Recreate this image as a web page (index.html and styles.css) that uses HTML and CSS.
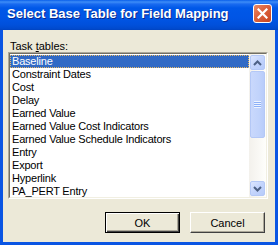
FILE: index.html
```html
<!DOCTYPE html>
<html lang="en">
<head>
    <meta charset="UTF-8">
    <title>Select Base Table for Field Mapping</title>
    <link rel="stylesheet" href="styles.css">
</head>
<body>
    <div class="window">
        <div class="titlebar">
            <span class="title">Select Base Table for Field Mapping</span>
            <div class="close">
                <svg width="11" height="11" viewBox="0 0 11 11">
                    <path d="M1.5 1.5 L9.5 9.5 M9.5 1.5 L1.5 9.5" stroke="#fff" stroke-width="2.2" stroke-linecap="square"/>
                </svg>
            </div>
        </div>
        <div class="frame">
            <div class="content">
                <div class="label">Task <u>t</u>ables:</div>
                <div class="listbox">
                    <div class="listbox-inner">
                        <ul class="items">
                            <li class="selected">Baseline</li>
                            <li>Constraint Dates</li>
                            <li>Cost</li>
                            <li>Delay</li>
                            <li>Earned Value</li>
                            <li>Earned Value Cost Indicators</li>
                            <li>Earned Value Schedule Indicators</li>
                            <li>Entry</li>
                            <li>Export</li>
                            <li>Hyperlink</li>
                            <li>PA_PERT Entry</li>
                        </ul>
                        <div class="scrollbar">
                            <div class="sb-btn">
                                <span>
                                    <svg width="9" height="6" viewBox="0 0 9 6">
                                        <path d="M1 5 L4.5 1.5 L8 5" fill="none" stroke="#4D6185" stroke-width="2"/>
                                    </svg>
                                </span>
                            </div>
                            <div class="sb-track">
                                <div class="sb-thumb">
                                    <span class="grip"></span>
                                </div>
                            </div>
                            <div class="sb-btn">
                                <span>
                                    <svg width="9" height="6" viewBox="0 0 9 6">
                                        <path d="M1 1 L4.5 4.5 L8 1" fill="none" stroke="#4D6185" stroke-width="2"/>
                                    </svg>
                                </span>
                            </div>
                        </div>
                    </div>
                </div>
                <div class="buttons">
                    <button class="btn default">OK</button>
                    <button class="btn">Cancel</button>
                </div>
            </div>
        </div>
    </div>
</body>
</html>
```

FILE: styles.css
```css
* {
    box-sizing: border-box;
}
html, body {
    margin: 0;
}
body {
    width: 278px;
    height: 245px;
    overflow: hidden;
    font-family: "Liberation Sans", Arial, sans-serif;
    font-size: 11px;
    color: #000;
}
.window {
    width: 278px;
    height: 245px;
    display: flex;
    flex-direction: column;
    background: #0A55E3;
}
.titlebar {
    height: 30px;
    flex: none;
    display: flex;
    align-items: flex-start;
    justify-content: space-between;
    background: linear-gradient(to bottom, #0A5FEA 0, #3D8DF7 2px, #1A6BF0 4px, #0058E8 8px, #0055E5 18px, #0050DB 25px, #0049CC 29px, #0042BE 30px);
}
.title {
    color: #fff;
    font-weight: bold;
    font-size: 13px;
    line-height: 16px;
    margin: 6px 0 0 7px;
    white-space: nowrap;
    text-shadow: 1px 1px #0B2A8C;
}
.close {
    width: 19px;
    height: 19px;
    margin: 4px 6px 0 0;
    border: 1px solid #fff;
    border-radius: 3px;
    background: linear-gradient(135deg, #EB8A66 0%, #DD6540 40%, #C9441F 100%);
    display: flex;
    align-items: center;
    justify-content: center;
}
.close svg {
    display: block;
}
.frame {
    flex: 1;
    display: flex;
    padding: 0 3px 3px;
}
.content {
    flex: 1;
    background: #ECE9D8;
    display: flex;
    flex-direction: column;
}
.label {
    margin: 10px 0 0 7px;
    height: 12px;
    line-height: 12px;
}
.listbox {
    margin-left: 5px;
    width: 260px;
    height: 147px;
    border: 1px solid;
    border-color: #ACA899 #fff #fff #ACA899;
}
.listbox-inner {
    height: 100%;
    display: flex;
    background: #fff;
    border: 1px solid;
    border-color: #716F64 #F1EFE2 #F1EFE2 #716F64;
}
.items {
    flex: 1;
    list-style: none;
    margin: 0;
    padding: 1px 0 0;
    overflow: hidden;
}
.items li {
    height: 13px;
    line-height: 13px;
    padding-left: 2px;
    white-space: nowrap;
    letter-spacing: -0.2px;
}
.items li.selected {
    background: #316AC5;
    color: #fff;
    outline: 1px dotted #E9B964;
    outline-offset: -1px;
}
.scrollbar {
    width: 17px;
    flex: none;
    display: flex;
    flex-direction: column;
    background: linear-gradient(to right, #F3F1EC, #FEFEFB);
}
.sb-btn {
    height: 17px;
    flex: none;
    display: flex;
    padding: 1px;
}
.sb-btn span {
    flex: 1;
    display: flex;
    align-items: center;
    justify-content: center;
    border: 1px solid #B4C8F6;
    border-radius: 2px;
    background: linear-gradient(135deg, #DCE6FE 0%, #C3D4FC 50%, #B6CBFA 100%);
}
.sb-track {
    flex: 1;
    padding: 0 1px;
}
.sb-thumb {
    height: 67px;
    border: 1px solid #B4C8F6;
    border-radius: 2px;
    background: linear-gradient(to right, #C9D8FC, #C1D3FB 60%, #B8CCFA);
    display: flex;
    align-items: center;
    justify-content: center;
}
.grip {
    width: 7px;
    height: 7px;
    background: repeating-linear-gradient(to bottom, #EEF4FE 0, #EEF4FE 1px, #8CB0F8 1px, #8CB0F8 2px);
}
.buttons {
    display: flex;
    justify-content: flex-end;
    gap: 10px;
    margin: 13px 10px 0 0;
}
.btn {
    width: 75px;
    height: 21px;
    padding: 0;
    font-family: "Liberation Sans", Arial, sans-serif;
    font-size: 11px;
    color: #000;
    background: #ECE9D8;
    border: 1px solid;
    border-color: #fff #404040 #404040 #fff;
    box-shadow: inset -1px -1px #ACA899;
}
.btn.default {
    border-color: #000;
    box-shadow: inset 1px 1px #fff, inset -1px -1px #404040, inset -2px -2px #ACA899;
}
```
